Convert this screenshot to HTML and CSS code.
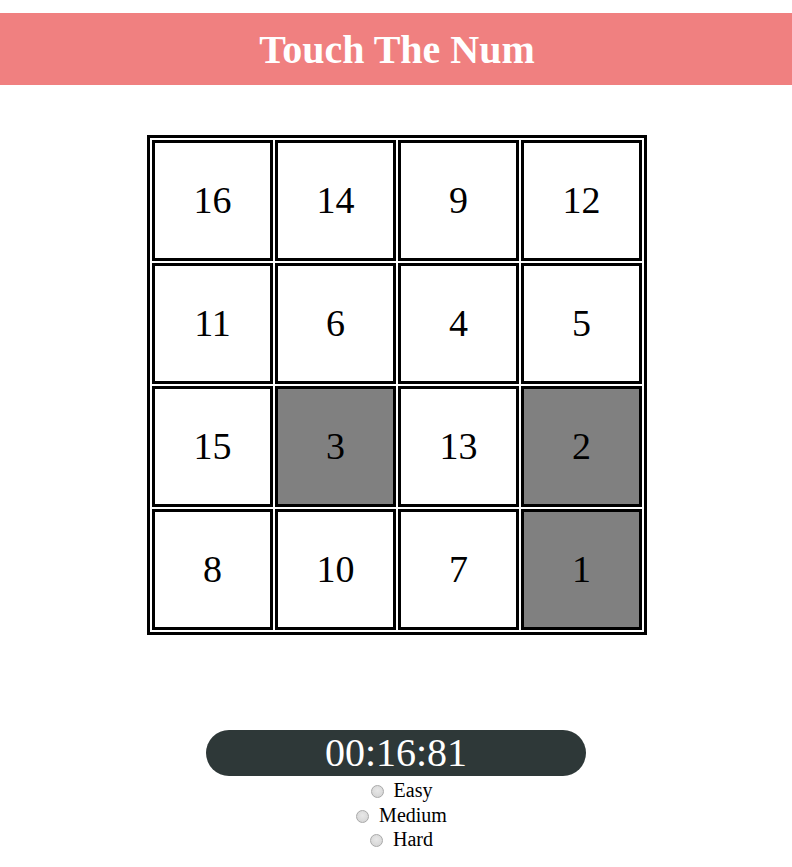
FILE: index.html
```html
<!DOCTYPE html>
<html>
<head>
<meta charset="utf-8">
<title>Touch The Num</title>
<link rel="stylesheet" href="styles.css">
</head>
<body>
<header class="header"><h1 class="title">Touch The Num</h1></header>
<main class="main">
  <table class="board">
    <tr><td class="cell">16</td><td class="cell">14</td><td class="cell">9</td><td class="cell">12</td></tr>
    <tr><td class="cell">11</td><td class="cell">6</td><td class="cell">4</td><td class="cell">5</td></tr>
    <tr><td class="cell">15</td><td class="cell done">3</td><td class="cell">13</td><td class="cell done">2</td></tr>
    <tr><td class="cell">8</td><td class="cell">10</td><td class="cell">7</td><td class="cell done">1</td></tr>
  </table>
  <div class="timer">00:16:81</div>
  <div class="levels">
    <label class="level"><input class="radio" type="radio" name="level"> Easy</label>
    <label class="level"><input class="radio" type="radio" name="level"> Medium</label>
    <label class="level"><input class="radio" type="radio" name="level"> Hard</label>
  </div>
</main>
</body>
</html>
```
FILE: styles.css
```css
html, body {
  margin: 0;
  padding: 0;
  background: #fff;
}
body {
  font-family: "Liberation Serif", "Times New Roman", serif;
  color: #000;
}
.header {
  margin-top: 13px;
  height: 72px;
  background: #f08080;
  display: flex;
  align-items: center;
  justify-content: center;
}
.title {
  margin: 0;
  font-size: 40px;
  font-weight: bold;
  color: #fff;
  line-height: 46px;
  position: relative;
  top: 1px;
  left: 1px;
}
.main {
  display: flex;
  flex-direction: column;
  align-items: center;
}
.board {
  margin-top: 50px;
  margin-left: 2px;
  border: 3px solid #000;
  border-spacing: 2px;
}
.cell {
  width: 115px;
  height: 113px;
  padding: 0 0 2px 0;
  border: 3px solid #000;
  text-align: center;
  vertical-align: middle;
  font-size: 38px;
  background: #fff;
}
.cell.done {
  background: #808080;
}
.timer {
  margin-top: 95px;
  width: 380px;
  height: 46px;
  line-height: 46px;
  border-radius: 23px;
  background: #2e3838;
  color: #fff;
  font-size: 40px;
  text-align: center;
}
.levels {
  display: flex;
  flex-direction: column;
  align-items: center;
  font-size: 20px;
  line-height: 24.5px;
  margin-top: 2px;
  margin-left: 6px;
}
.level {
  display: block;
  white-space: pre;
}
.radio {
  appearance: none;
  -webkit-appearance: none;
  width: 13px;
  height: 13px;
  margin: 3px 5px 0 5px;
  border: 1px solid #a9a9a9;
  border-radius: 50%;
  background: radial-gradient(circle at 50% 40%, #e8e8e8 0%, #d8d8d8 70%, #cfcfcf 100%);
  box-sizing: border-box;
  vertical-align: -1px;
}
```
